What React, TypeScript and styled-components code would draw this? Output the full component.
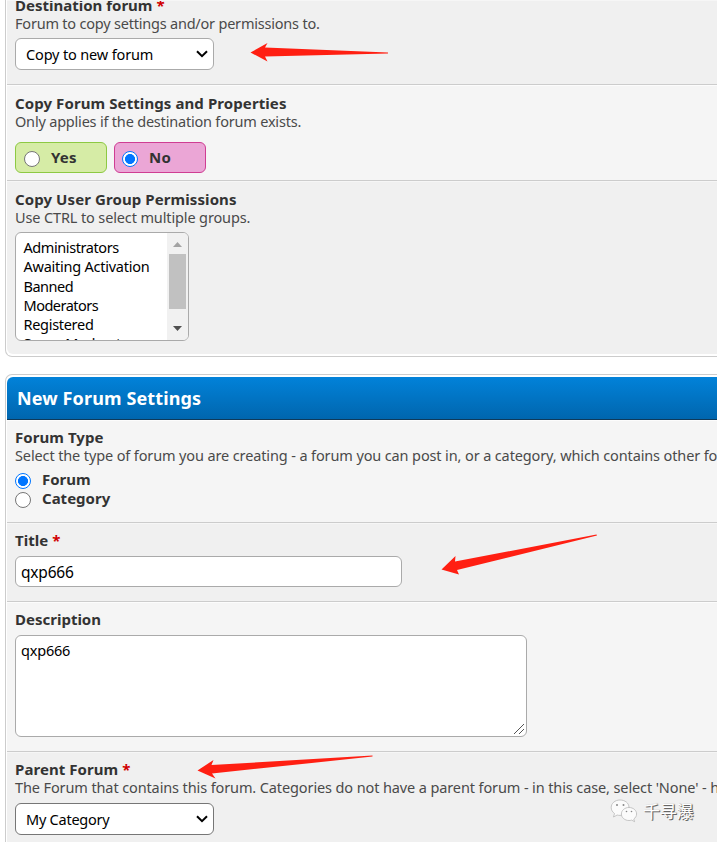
import React from "react";
import styled, { createGlobalStyle } from "styled-components";

const GlobalStyle = createGlobalStyle`
  * { box-sizing: border-box; }
  html, body { margin: 0; height: 842px; overflow: hidden; background: #fff; }
  body { font-family: Tahoma, "Noto Sans", sans-serif; font-size: 15px; color: #333; }
`;

const Page = styled.main`
  position: relative;
  width: 717px;
  height: 842px;
  padding-left: 5px;
  overflow: hidden;
  display: flex;
  flex-direction: column;
  gap: 17px;
`;

const Panel = styled.section<{ $edge: "top" | "bottom"; $height: number }>`
  flex: none;
  width: 730px;
  height: ${(p) => p.$height}px;
  border: 1px solid #ccc;
  padding: ${(p) => (p.$edge === "bottom" ? "0 1px 2px" : "2px 1px 0")};
  border-top-width: ${(p) => (p.$edge === "top" ? 1 : 0)}px;
  border-bottom-width: ${(p) => (p.$edge === "bottom" ? 1 : 0)}px;
  border-radius: ${(p) => (p.$edge === "bottom" ? "0 0 7px 7px" : "7px 7px 0 0")};
`;

const PanelTitle = styled.h2`
  margin: 0;
  height: 43px;
  padding-left: 10px;
  border-bottom: 1px solid #0f3a5a;
  border-radius: 6px 6px 0 0;
  background: linear-gradient(#0282d9, #0066ae);
  color: #fff;
  font-size: 18px;
  line-height: 43px;
  letter-spacing: 0.12px;
  white-space: nowrap;
`;

const Row = styled.div<{ $height: number; $alt?: boolean; $pad?: number; $last?: boolean }>`
  height: ${(p) => p.$height}px;
  padding: ${(p) => p.$pad ?? 8}px 0 0 8px;
  background: ${(p) => (p.$alt ? "#f0f0f0" : "#f5f5f5")};
  border-top: 1px solid ${(p) => (p.$alt ? "#f6f6f6" : "#fcfcfc")};
  border-bottom: ${(p) => (p.$last ? "0" : "1px solid #ccc")};
  border-radius: ${(p) => (p.$last ? "0 0 6px 6px" : "0")};
  overflow: hidden;
`;

const Label = styled.div<{ $ls?: number; $raise?: number }>`
  height: 18px;
  line-height: 18px;
  margin-top: -${(p) => p.$raise ?? 0}px;
  font-weight: 700;
  white-space: nowrap;
  letter-spacing: ${(p) => p.$ls ?? 0}px;
`;

const Required = styled.span`
  color: #d00000;
`;

const Hint = styled.div<{ $ls: number }>`
  height: 18px;
  line-height: 18px;
  color: #4a4a4a;
  font-size: 14.5px;
  white-space: nowrap;
  letter-spacing: ${(p) => p.$ls}px;
`;

const SelectBox = styled.div<{ $border: string; $ls: number; $gap?: number }>`
  display: flex;
  align-items: center;
  justify-content: space-between;
  width: 199px;
  height: 32px;
  margin-top: ${(p) => p.$gap ?? 6}px;
  padding: 0 5px 0 10px;
  border: 1px solid ${(p) => p.$border};
  border-radius: 6px;
  background: #fff;
  color: #000;
  font-size: 14.5px;
  letter-spacing: ${(p) => p.$ls}px;
`;

const ChoiceRow = styled.div`
  display: flex;
  gap: 7px;
  margin-top: 12px;
`;

const Choice = styled.label<{ $tone: "yes" | "no" }>`
  display: flex;
  align-items: center;
  gap: 11px;
  width: 92px;
  height: 31px;
  padding: 0 0 2px ${(p) => (p.$tone === "yes" ? 8 : 7)}px;
  border: 1px solid ${(p) => (p.$tone === "yes" ? "#8dc943" : "#cf3d93")};
  border-radius: 6px;
  background: ${(p) => (p.$tone === "yes" ? "#d6eca6" : "#eba6d6")};
  font-weight: 700;
  letter-spacing: 0.2px;
`;

const Dot = styled.span<{ $on?: boolean }>`
  flex: none;
  width: 16px;
  height: 16px;
  margin-top: 4px;
  border: 1px solid ${(p) => (p.$on ? "#0075ff" : "#767676")};
  border-radius: 50%;
  background: ${(p) => (p.$on ? "radial-gradient(circle, #0075ff 0 4.7px, #fff 5.3px)" : "#fff")};
`;

const RadioList = styled.div`
  display: flex;
  flex-direction: column;
  margin-top: 6px;
`;

const RadioLine = styled.label`
  display: flex;
  align-items: center;
  gap: 11px;
  height: 18.5px;
  font-weight: 700;
`;

const ListBox = styled.div`
  display: flex;
  justify-content: space-between;
  width: 174px;
  height: 109px;
  margin-top: 6px;
  border: 1px solid #aaa;
  border-radius: 6px;
  background: #fff;
  color: #000;
  overflow: hidden;
`;

const Options = styled.div`
  padding: 5px 0 0 7.5px;
`;

const Option = styled.div<{ $ls: number }>`
  height: 19.3px;
  line-height: 19.3px;
  font-size: 14.5px;
  white-space: nowrap;
  letter-spacing: ${(p) => p.$ls}px;
`;

const Scrollbar = styled.div`
  display: flex;
  flex-direction: column;
  align-items: center;
  width: 21px;
  padding: 9px 2px;
  background: #f1f1f1;
`;

const Thumb = styled.div`
  width: 17px;
  height: 55px;
  margin: 7px 0 17px;
  background: #c1c1c1;
`;

const TextInput = styled.div`
  width: 387px;
  height: 31px;
  margin-top: 7px;
  padding-left: 5px;
  border: 1px solid #aaa;
  border-radius: 6px;
  background: #fff;
  color: #000;
  font-size: 15.5px;
  line-height: 31px;
  letter-spacing: -0.2px;
`;

const TextArea = styled.div`
  display: flex;
  justify-content: space-between;
  width: 512px;
  height: 102px;
  margin-top: 7px;
  padding: 4px 1px 1px 5px;
  border: 1px solid #aaa;
  border-radius: 6px;
  background: #fff;
  color: #000;
  font-size: 14.5px;
  line-height: 20px;
  letter-spacing: -0.2px;
`;

const Grip = styled.svg`
  align-self: flex-end;
`;

const Overlay = styled.svg`
  position: absolute;
  inset: 0;
  pointer-events: none;
`;

const Watermark = styled.div`
  position: absolute;
  left: 610px;
  top: 797px;
  display: flex;
  align-items: center;
  gap: 5px;
  color: #fff;
  font: 17px/28px "Noto Sans CJK SC", sans-serif;
  letter-spacing: -0.3px;
  text-shadow: 1px 1px 0 #666, 1px 0 1px #888;
`;

const Chevron = () => (
  <svg width="12" height="8" viewBox="0 0 12 8">
    <path d="M1 1.2 6 6.2 11 1.2" fill="none" stroke="#000" strokeWidth="2" />
  </svg>
);

const Arrows = () => (
  <Overlay width="717" height="842" viewBox="0 0 717 842" fill="#ff1f12">
    <path d="M250.5 52.5 267.5 43 265 47.5 388 52.6V53.6L265 56.5 267.5 61.5Z" />
    <path d="M441.5 569.5 455.5 556 455 561.5 596.5 534.5 597 535.5 457 570 459 574.5Z" />
    <path d="M197.5 770.5 213.5 760 211.5 765 372.5 755.6V756.6L212 773.5 215.5 778.5Z" />
  </Overlay>
);

const WeChatMark = () => (
  <svg width="28" height="26" viewBox="0 0 28 26" fill="#fbfbfb" stroke="#b0b0b0" strokeWidth=".7">
    <path d="M10 2C5 2 1.200 5.300 1.200 9.500c0 2.500 1.300 4.600 3.300 6L3.500 19l3.700-2c1 .3 1.800.4 2.800.4 5 0 9-3.400 9-7.900S15 2 10 2Z" />
    <path d="M19 9.500c-4.300 0-7.600 2.900-7.600 6.500s3.300 6.500 7.600 6.500c1 0 1.800-.1 2.600-.4l3 1.600-.8-2.700c1.700-1.200 2.800-3 2.800-5 0-3.600-3.300-6.500-7.600-6.500Z" />
    <g fill="#888" stroke="none">
      <circle cx="7" cy="7" r="1" />
      <circle cx="13.500" cy="7" r="1" />
      <circle cx="16.500" cy="13.500" r=".8" />
      <circle cx="21.500" cy="13.500" r=".8" />
    </g>
  </svg>
);

const groups = [
  { name: "Administrators", spacing: -0.42 },
  { name: "Awaiting Activation", spacing: -0.24 },
  { name: "Banned", spacing: -0.5 },
  { name: "Moderators", spacing: -0.5 },
  { name: "Registered", spacing: -0.3 },
  { name: "Super Moderators", spacing: -0.35 },
];

export default function App() {
  return (
    <>
      <GlobalStyle />
      <Page>
        <Panel $edge="bottom" $height={357}>
          <Row $alt $height={85} $pad={0}>
            <Label $raise={5}>
              Destination forum <Required>*</Required>
            </Label>
            <Hint $ls={-0.21}>Forum to copy settings and/or permissions to.</Hint>
            <SelectBox $border="#aaa" $ls={-0.15}>
              Copy to new forum
              <Chevron />
            </SelectBox>
          </Row>
          <Row $height={96}>
            <Label $ls={0.09}>Copy Forum Settings and Properties</Label>
            <Hint $ls={-0.2}>Only applies if the destination forum exists.</Hint>
            <ChoiceRow>
              <Choice $tone="yes">
                <Dot />
                Yes
              </Choice>
              <Choice $tone="no">
                <Dot $on />
                No
              </Choice>
            </ChoiceRow>
          </Row>
          <Row $alt $last $height={173}>
            <Label $ls={0.09}>Copy User Group Permissions</Label>
            <Hint $ls={-0.13}>Use CTRL to select multiple groups.</Hint>
            <ListBox>
              <Options>
                {groups.map((g) => (
                  <Option key={g.name} $ls={g.spacing}>{g.name}</Option>
                ))}
              </Options>
              <Scrollbar>
                <svg width="9" height="5"><path d="M0 5 4.500 0 9 5Z" fill="#a3a3a3" /></svg>
                <Thumb />
                <svg width="9" height="5"><path d="M0 0 4.500 5 9 0Z" fill="#505050" /></svg>
              </Scrollbar>
            </ListBox>
          </Row>
        </Panel>
        <Panel $edge="top" $height={480}>
          <PanelTitle>New Forum Settings</PanelTitle>
          <Row $height={103} $pad={7}>
            <Label $ls={0.05}>Forum Type</Label>
            <Hint $ls={-0.125}>Select the type of forum you are creating - a forum you can post in, or a category, which contains other forums</Hint>
            <RadioList>
              <RadioLine><Dot $on />Forum</RadioLine>
              <RadioLine><Dot />Category</RadioLine>
            </RadioList>
          </Row>
          <Row $alt $height={79} $pad={7}>
            <Label $ls={0.05}>Title <Required>*</Required></Label>
            <TextInput>qxp666</TextInput>
          </Row>
          <Row $height={150} $pad={7}>
            <Label>Description</Label>
            <TextArea>
              qxp666
              <Grip width="12" height="12"><path d="M1 11 11 1M6 11 11 6" stroke="#555" fill="none" /></Grip>
            </TextArea>
          </Row>
          <Row $alt $height={120} $pad={7}>
            <Label $ls={0.06}>Parent Forum <Required>*</Required></Label>
            <Hint $ls={-0.115}>The Forum that contains this forum. Categories do not have a parent forum - in this case, select 'None' - however</Hint>
            <SelectBox $border="#767676" $ls={-0.24} $gap={7}>
              My Category
              <Chevron />
            </SelectBox>
          </Row>
        </Panel>
        <Arrows />
        <Watermark><WeChatMark />千寻瀑</Watermark>
      </Page>
    </>
  );
}
